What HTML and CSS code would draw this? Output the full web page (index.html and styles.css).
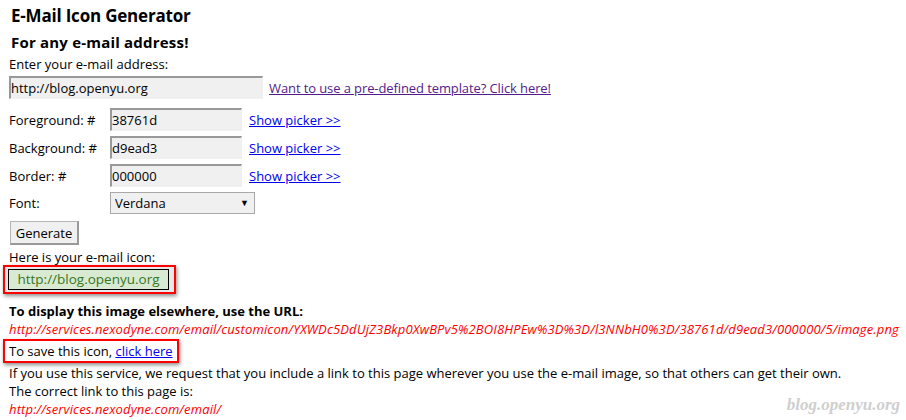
FILE: index.html
```html
<!DOCTYPE html>
<html>
<head>
<meta charset="utf-8">
<link rel="stylesheet" href="styles.css">
</head>
<body>
<div class="page">
  <h1 class="title">E-Mail Icon Generator</h1>
  <h2 class="subtitle">For any e-mail address!</h2>
  <div class="line">Enter your e-mail address:</div>
  <div class="email-row">
    <input class="field field-wide" type="text" value="http://blog.openyu.org">
    <a class="visited" href="#">Want to use a pre-defined template? Click here!</a>
  </div>
  <div class="form-grid">
    <div class="label">Foreground: #</div>
    <input class="field" type="text" value="38761d">
    <a class="link picker" href="#">Show picker &gt;&gt;</a>
    <div class="label">Background: #</div>
    <input class="field" type="text" value="d9ead3">
    <a class="link picker" href="#">Show picker &gt;&gt;</a>
    <div class="label">Border: #</div>
    <input class="field" type="text" value="000000">
    <a class="link picker" href="#">Show picker &gt;&gt;</a>
    <div class="label">Font:</div>
    <span class="select-wrap"><select class="select"><option>Verdana</option></select></span>
    <span></span>
  </div>
  <button class="btn">Generate</button>
  <div class="line">Here is your e-mail icon:</div>
  <div class="icon-box"><span class="icon-img">http://blog.openyu.org</span></div>
  <div class="line bold">To display this image elsewhere, use the URL:</div>
  <div class="line url">http://services.nexodyne.com/email/customicon/YXWDc5DdUjZ3Bkp0XwBPv5%2BOI8HPEw%3D%3D/l3NNbH0%3D/38761d/d9ead3/000000/5/image.png</div>
  <div class="save-box">To save this icon, <a class="link" href="#">click here</a></div>
  <div class="line">If you use this service, we request that you include a link to this page wherever you use the e-mail image, so that others can get their own.</div>
  <div class="line">The correct link to this page is:</div>
  <div class="line url">http://services.nexodyne.com/email/</div>
</div>
<div class="watermark">blog.openyu.org</div>
</body>
</html>
```
FILE: styles.css
```css
html, body {
  margin: 0;
  padding: 0;
  background: #fff;
}
body {
  font-family: "Open Sans", "Liberation Sans", sans-serif;
  font-size: 13px;
  color: #000;
  line-height: 18px;
  width: 906px;
  height: 420px;
  overflow: hidden;
  position: relative;
}
.page {
  padding: 5px 0 0 9px;
}
.title {
  font-size: 17px;
  line-height: 22px;
  font-weight: bold;
  margin: 0 0 5px 2px;
  letter-spacing: -0.2px;
}
.subtitle {
  font-size: 15px;
  line-height: 20px;
  font-weight: bold;
  margin: 0 0 3px 2px;
  letter-spacing: 0.2px;
}
.line {
  line-height: 18px;
  white-space: nowrap;
}
.bold { font-weight: bold; }
.url {
  color: #f00;
  font-style: italic;
  letter-spacing: 0.14px;
}
.email-row {
  display: flex;
  align-items: center;
  gap: 6px;
  margin-top: 3px;
}
.field {
  box-sizing: border-box;
  height: 23px;
  margin: 0;
  padding: 0;
  font: 13px "Open Sans", "Liberation Sans", sans-serif;
  color: #000;
  background: #f0f0f0;
  border: 0;
  border-top: 2px solid #999;
  border-left: 2px solid #999;
  border-right: 1px solid #f0f0f0;
  border-bottom: 1px solid #f0f0f0;
  outline: none;
  width: 132px;
}
.field-wide { width: 254px; }
.visited {
  color: #551a8b;
  text-decoration: underline;
  letter-spacing: -0.1px;
}
.link {
  color: #00e;
  text-decoration: underline;
}
.form-grid {
  display: grid;
  grid-template-columns: 101px 132px auto;
  column-gap: 0;
  row-gap: 5px;
  align-items: center;
  justify-items: start;
  margin-top: 9px;
}
.picker { margin-left: 7px; }
.label { line-height: 18px; }
.select-wrap {
  position: relative;
  display: inline-block;
}
.select-wrap::after {
  content: "\25BC";
  position: absolute;
  right: 6px;
  top: 4px;
  font-size: 9px;
  line-height: 14px;
  pointer-events: none;
}
.select {
  appearance: none;
  -webkit-appearance: none;
  box-sizing: border-box;
  width: 145px;
  height: 22px;
  margin: 0;
  padding: 0 0 0 4px;
  font: 13px "Open Sans", "Liberation Sans", sans-serif;
  color: #000;
  background: #f0f0f0;
  border: 1px solid #a9a9a9;
  border-radius: 0;
}
.btn {
  display: block;
  box-sizing: border-box;
  height: 24px;
  width: 69px;
  margin: 7px 0 3px 1px;
  padding: 0;
  font: 13px "Open Sans", "Liberation Sans", sans-serif;
  color: #000;
  background: #f0f0f0;
  border: 1px solid #b5b5b5;
  border-right: 2px solid #999;
  border-bottom: 2px solid #999;
}
.icon-box {
  width: fit-content;
  margin: -1px 0 8px -6px;
  border: 2px solid #f00;
  padding: 2px 5px 2px 3px;
  background: #e8e8e8;
  box-shadow: 1px 2px 4px rgba(0,0,0,0.45);
}
.icon-img {
  display: block;
  box-sizing: border-box;
  height: 21px;
  width: 161px;
  line-height: 19px;
  border: 1px solid #000;
  background: #d9ead3;
  color: #38761d;
  text-align: center;
  font-size: 13.5px;
}
.save-box {
  width: fit-content;
  margin: 1px 0 1px -6px;
  border: 2px solid #f00;
  padding: 1px 4px 0 4px;
  height: 19px;
  line-height: 19px;
  white-space: nowrap;
  box-shadow: 1px 2px 4px rgba(0,0,0,0.45);
}
.watermark {
  position: absolute;
  right: 6px;
  bottom: 6px;
  font-family: "Liberation Serif", "Times New Roman", serif;
  font-style: italic;
  font-weight: bold;
  font-size: 17px;
  color: #cfcfcf;
}
```
